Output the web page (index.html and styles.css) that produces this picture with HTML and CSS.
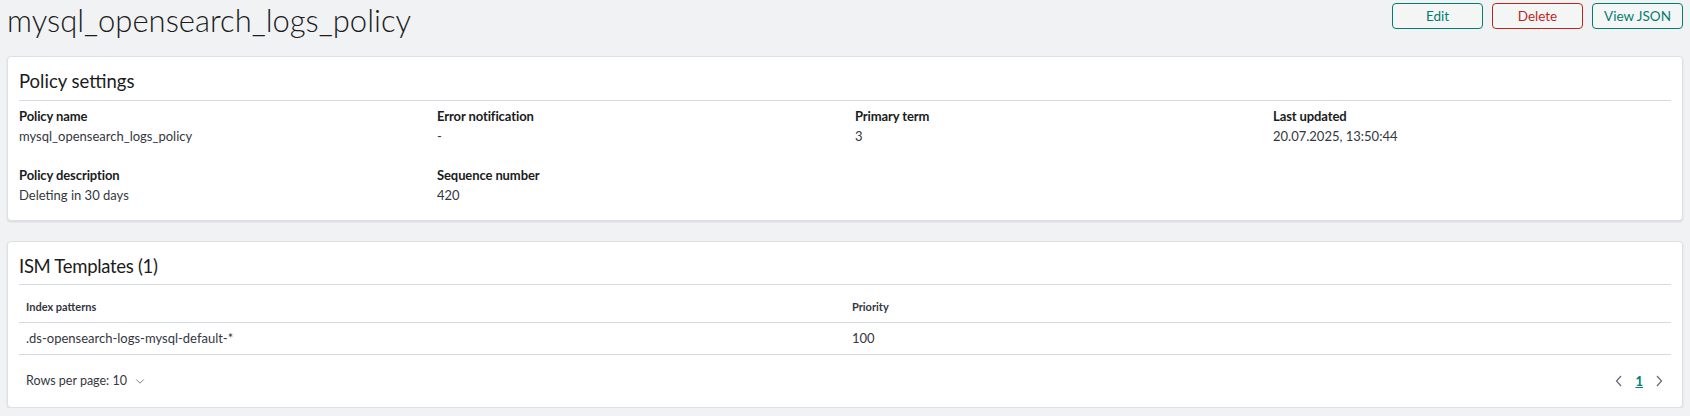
FILE: index.html
```html
<!DOCTYPE html>
<html lang="en">
<head>
<meta charset="utf-8">
<title>mysql_opensearch_logs_policy</title>
<link rel="stylesheet" href="styles.css">
</head>
<body>
<div class="page">
  <header class="page-header">
    <h1 class="page-title">mysql_opensearch_logs_policy</h1>
    <div class="actions">
      <button class="btn">Edit</button>
      <button class="btn btn-danger">Delete</button>
      <button class="btn">View JSON</button>
    </div>
  </header>

  <section class="panel panel-settings">
    <h2 class="panel-title">Policy settings</h2>
    <div class="rule"></div>
    <div class="info-grid">
      <div class="item"><div class="label">Policy name</div><div class="value">mysql_opensearch_logs_policy</div></div>
      <div class="item"><div class="label">Error notification</div><div class="value">-</div></div>
      <div class="item"><div class="label">Primary term</div><div class="value">3</div></div>
      <div class="item"><div class="label">Last updated</div><div class="value">20.07.2025, 13:50:44</div></div>
      <div class="item"><div class="label">Policy description</div><div class="value">Deleting in 30 days</div></div>
      <div class="item"><div class="label">Sequence number</div><div class="value">420</div></div>
    </div>
  </section>

  <section class="panel panel-table">
    <h2 class="panel-title">ISM Templates (1)</h2>
    <div class="rule"></div>
    <table class="table">
      <thead>
        <tr><th>Index patterns</th><th>Priority</th></tr>
      </thead>
      <tbody>
        <tr><td>.ds-opensearch-logs-mysql-default-*</td><td>100</td></tr>
      </tbody>
    </table>
    <div class="table-footer">
      <div class="rows-per-page">Rows per page: 10
        <svg class="chev" width="10" height="10" viewBox="0 0 16 16"><path d="M2 5.5l6 6 6-6" fill="none" stroke="#69707d" stroke-width="1.4"/></svg>
      </div>
      <nav class="pager">
        <svg class="arrow" width="12" height="14" viewBox="0 0 12 14"><path d="M8 2L3.5 7 8 12" fill="none" stroke="#69707d" stroke-width="1.3"/></svg>
        <span class="page-num">1</span>
        <svg class="arrow" width="12" height="14" viewBox="0 0 12 14"><path d="M4 2l4.5 5L4 12" fill="none" stroke="#69707d" stroke-width="1.3"/></svg>
      </nav>
    </div>
  </section>
</div>
</body>
</html>
```
FILE: styles.css
```css
* { box-sizing: border-box; }
html, body { margin: 0; padding: 0; }
body {
  background: #f1f2f4;
  font-family: Lato, "Noto Sans", sans-serif;
  color: #343741;
  font-size: 13px;
}
.page { padding: 0 7px; }

.page-header {
  display: flex;
  justify-content: space-between;
  align-items: flex-start;
  height: 56px;
}
.page-title {
  margin: 0;
  font-size: 31px;
  line-height: 40px;
  font-weight: 300;
  color: #1a1c21;
}
.actions {
  display: flex;
  gap: 9px;
  margin-top: 3px;
}
.btn {
  width: 91px;
  height: 26px;
  border: 1px solid #017d73;
  border-radius: 4px;
  background: #f4f6f6;
  color: #017d73;
  font-family: inherit;
  font-size: 13.5px;
  padding: 0;
}
.btn-danger {
  border-color: #bd271e;
  color: #bd271e;
}

.panel {
  background: #fff;
  border: 1px solid #dde1e6;
  border-radius: 4px;
  box-shadow: 0 1px 2px rgba(0,0,0,0.12);
  padding: 12px 11px 15px;
}
.panel-table { margin-top: 20px; padding-bottom: 8px; }
.panel-title {
  margin: 0;
  font-size: 18.5px;
  line-height: 24px;
  font-weight: 400;
  color: #1a1c21;
}
.panel-table .panel-title { letter-spacing: -0.3px; }
.rule {
  height: 1px;
  background: #d3dae6;
  margin-top: 7px;
}
.panel-table .rule { margin-top: 6px; }

.info-grid {
  display: grid;
  grid-template-columns: repeat(4, 1fr);
  column-gap: 20px;
  row-gap: 19px;
  margin-top: 5px;
}
.label {
  font-weight: 700;
  font-size: 13px;
  letter-spacing: -0.1px;
  color: #1a1c21;
  line-height: 20px;
}
.value {
  line-height: 20px;
  color: #343741;
}

.table {
  width: 100%;
  border-collapse: collapse;
  margin-top: 6px;
  table-layout: fixed;
}
.table th {
  text-align: left;
  font-size: 11px;
  font-weight: 700;
  color: #343741;
  height: 31px;
  padding: 0 7px;
  border-bottom: 1px solid #d3dae6;
}
.table td {
  height: 32px;
  padding: 0 7px;
  border-bottom: 1px solid #d3dae6;
  color: #343741;
}

.table-footer {
  display: flex;
  justify-content: space-between;
  align-items: center;
  height: 36px;
  margin-top: 8px;
  padding: 0 6px 0 7px;
}
.rows-per-page {
  display: flex;
  align-items: center;
  gap: 8px;
  font-size: 12.5px;
  color: #343741;
}
.pager {
  display: flex;
  align-items: center;
  gap: 10px;
}
.page-num {
  color: #017d73;
  font-weight: 700;
  text-decoration: underline;
  font-size: 13px;
}
```
